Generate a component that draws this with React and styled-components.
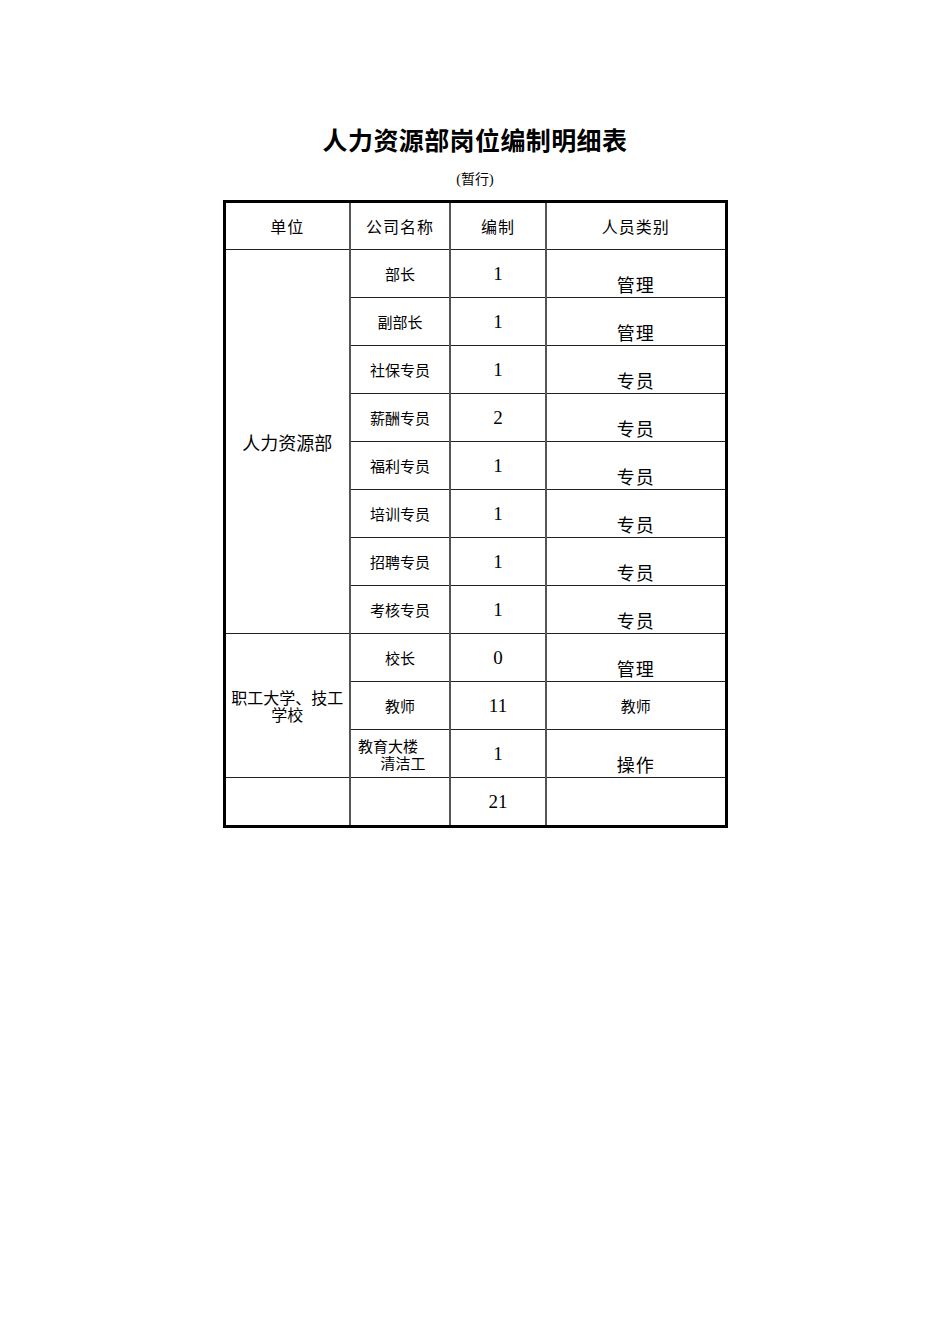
import React from 'react';
import styled, { createGlobalStyle } from 'styled-components';

const GlobalStyle = createGlobalStyle`
  html, body {
    margin: 0;
    padding: 0;
    background: #fff;
  }
  body {
    width: 950px;
    min-height: 1344px;
    font-family: "Noto Sans CJK SC", "Liberation Serif", serif;
    color: #000;
  }
`;

const Page = styled.div`
  width: 950px;
  padding-top: 124px;
  display: flex;
  flex-direction: column;
  align-items: center;
`;

const Title = styled.h1`
  margin: 0;
  font-family: "Noto Sans CJK SC", sans-serif;
  font-size: 25px;
  font-weight: 700;
  line-height: 30px;
  letter-spacing: 0.4px;
`;

const Subtitle = styled.div`
  margin-top: 16px;
  font-family: "Liberation Serif", "Noto Sans CJK SC", serif;
  font-size: 14px;
  line-height: 20px;
`;

const Table = styled.table`
  margin-top: 10px;
  width: 502px;
  border-collapse: collapse;
  table-layout: fixed;
  border: 3px solid #000;
`;

const Cell = styled.td`
  height: ${(p) => (p.$head ? 46 : p.$bottom ? 44 : 47)}px;
  padding: 0 ${(p) => p.$pad || 0}px;
  border-left: 2px solid #555;
  border-right: 2px solid #555;
  border-top: 1px solid #222;
  border-bottom: 1px solid #222;
  text-align: center;
  vertical-align: ${(p) => (p.$bottom ? 'bottom' : 'middle')};
  padding-bottom: ${(p) => (p.$bottom ? '3px' : '0')};
  font-family: ${(p) =>
    p.$num ? '"Liberation Serif", serif' : '"Noto Sans CJK SC", sans-serif'};
  font-size: ${(p) => p.$size || 15}px;
  line-height: ${(p) => (p.$tight ? '17px' : '20px')};
  letter-spacing: ${(p) => p.$ls || 0}px;
`;

const SplitName = styled.div`
  white-space: pre;
  text-align: left;
  padding-left: 7px;
  line-height: 17px;
`;

const rows = [
  ['部长', '1', '管理'],
  ['副部长', '1', '管理'],
  ['社保专员', '1', '专员'],
  ['薪酬专员', '2', '专员'],
  ['福利专员', '1', '专员'],
  ['培训专员', '1', '专员'],
  ['招聘专员', '1', '专员'],
  ['考核专员', '1', '专员'],
];

export default function App() {
  return (
    <>
      <GlobalStyle />
      <Page>
        <Title>人力资源部岗位编制明细表</Title>
        <Subtitle>(暂行)</Subtitle>
        <Table>
          <colgroup>
            <col style={{ width: 126 }} />
            <col style={{ width: 100 }} />
            <col style={{ width: 96 }} />
            <col style={{ width: 180 }} />
          </colgroup>
          <tbody>
            <tr>
              <Cell $head $size={16} $ls={1}>单位</Cell>
              <Cell $head $size={16} $ls={1}>公司名称</Cell>
              <Cell $head $size={16} $ls={1}>编制</Cell>
              <Cell $head $size={16} $ls={1}>人员类别</Cell>
            </tr>
            {rows.map(([name, n, kind], i) => (
              <tr key={name}>
                {i === 0 && (
                  <Cell rowSpan={8} $size={18}>人力资源部</Cell>
                )}
                <Cell>{name}</Cell>
                <Cell $num $size={19}>{n}</Cell>
                <Cell $bottom $size={18} $ls={1}>{kind}</Cell>
              </tr>
            ))}
            <tr>
              <Cell rowSpan={3} $tight $size={16} $pad={2}>职工大学、技工学校</Cell>
              <Cell>校长</Cell>
              <Cell $num $size={19}>0</Cell>
              <Cell $bottom $size={18} $ls={1}>管理</Cell>
            </tr>
            <tr>
              <Cell>教师</Cell>
              <Cell $num $size={19}>11</Cell>
              <Cell>教师</Cell>
            </tr>
            <tr>
              <Cell>
                <SplitName>{'教育大楼\n\u2002\u2002\u2002清洁工'}</SplitName>
              </Cell>
              <Cell $num $size={19}>1</Cell>
              <Cell $bottom $size={18} $ls={1}>操作</Cell>
            </tr>
            <tr>
              <Cell />
              <Cell />
              <Cell $num $size={19}>21</Cell>
              <Cell />
            </tr>
          </tbody>
        </Table>
      </Page>
    </>
  );
}
